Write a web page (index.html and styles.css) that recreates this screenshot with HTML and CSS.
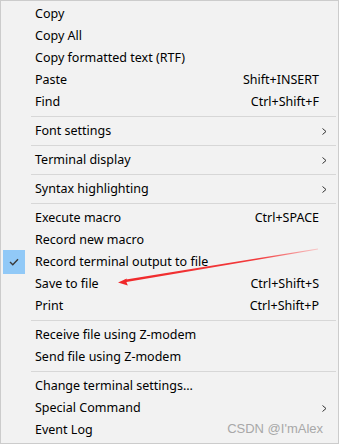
FILE: index.html
```html
<!DOCTYPE html>
<html lang="en">
<head>
  <meta charset="UTF-8">
  <title>Terminal context menu</title>
  <link rel="stylesheet" href="styles.css">
</head>
<body>
  <div class="menu">
    <div class="item"><span class="gutter"></span><span class="label">Copy</span><span class="keys"></span><span class="sub"></span></div>
    <div class="item"><span class="gutter"></span><span class="label">Copy All</span><span class="keys"></span><span class="sub"></span></div>
    <div class="item"><span class="gutter"></span><span class="label">Copy formatted text (RTF)</span><span class="keys"></span><span class="sub"></span></div>
    <div class="item"><span class="gutter"></span><span class="label">Paste</span><span class="keys">Shift+INSERT</span><span class="sub"></span></div>
    <div class="item"><span class="gutter"></span><span class="label">Find</span><span class="keys">Ctrl+Shift+F</span><span class="sub"></span></div>
    <div class="sep"></div>
    <div class="item"><span class="gutter"></span><span class="label">Font settings</span><span class="keys"></span><span class="sub"><svg width="5" height="7" viewBox="0 0 5 7"><polyline points="0.5,0.5 4,3.5 0.5,6.5" fill="none" stroke="#333" stroke-width="1"/></svg></span></div>
    <div class="sep"></div>
    <div class="item"><span class="gutter"></span><span class="label">Terminal display</span><span class="keys"></span><span class="sub"><svg width="5" height="7" viewBox="0 0 5 7"><polyline points="0.5,0.5 4,3.5 0.5,6.5" fill="none" stroke="#333" stroke-width="1"/></svg></span></div>
    <div class="sep"></div>
    <div class="item"><span class="gutter"></span><span class="label">Syntax highlighting</span><span class="keys"></span><span class="sub"><svg width="5" height="7" viewBox="0 0 5 7"><polyline points="0.5,0.5 4,3.5 0.5,6.5" fill="none" stroke="#333" stroke-width="1"/></svg></span></div>
    <div class="sep"></div>
    <div class="item"><span class="gutter"></span><span class="label">Execute macro</span><span class="keys">Ctrl+SPACE</span><span class="sub"></span></div>
    <div class="item"><span class="gutter"></span><span class="label">Record new macro</span><span class="keys"></span><span class="sub"></span></div>
    <div class="item"><span class="gutter"><span class="check"><svg width="10" height="8" viewBox="0 0 10 8"><polyline points="1,4 3.8,6.8 9,1.2" fill="none" stroke="#3a3a3a" stroke-width="1.4"/></svg></span></span><span class="label">Record terminal output to file</span><span class="keys"></span><span class="sub"></span></div>
    <div class="item"><span class="gutter"></span><span class="label">Save to file</span><span class="keys">Ctrl+Shift+S</span><span class="sub"></span></div>
    <div class="item"><span class="gutter"></span><span class="label">Print</span><span class="keys">Ctrl+Shift+P</span><span class="sub"></span></div>
    <div class="sep"></div>
    <div class="item"><span class="gutter"></span><span class="label">Receive file using Z-modem</span><span class="keys"></span><span class="sub"></span></div>
    <div class="item"><span class="gutter"></span><span class="label">Send file using Z-modem</span><span class="keys"></span><span class="sub"></span></div>
    <div class="sep"></div>
    <div class="item"><span class="gutter"></span><span class="label">Change terminal settings...</span><span class="keys"></span><span class="sub"></span></div>
    <div class="item"><span class="gutter"></span><span class="label">Special Command</span><span class="keys"></span><span class="sub"><svg width="5" height="7" viewBox="0 0 5 7"><polyline points="0.5,0.5 4,3.5 0.5,6.5" fill="none" stroke="#333" stroke-width="1"/></svg></span></div>
    <div class="item"><span class="gutter"></span><span class="label">Event Log</span><span class="keys"></span><span class="sub"></span></div>

    <!-- annotation drawn over the screenshot -->
    <svg class="arrow" width="339" height="444" viewBox="0 0 339 444">
      <defs>
        <linearGradient id="fade" x1="118" y1="282" x2="318" y2="249" gradientUnits="userSpaceOnUse">
          <stop offset="0" stop-color="#f0282a"/>
          <stop offset="0.7" stop-color="#f23a3c"/>
          <stop offset="1" stop-color="#f8c8c8"/>
        </linearGradient>
      </defs>
      <polygon points="318,248.6 318,249.4 125,282.2 124.5,279.8" fill="url(#fade)"/>
      <polygon points="118,282.6 127,278.4 126,281 127.8,285.6" fill="#f0282a"/>
    </svg>
    <span class="watermark">CSDN @I'mAlex</span>
  </div>
</body>
</html>
```

FILE: styles.css
```css
body {
  margin: 0;
  background-color: #f2f2f2;
}

.menu {
  position: relative;
  box-sizing: border-box;
  width: 339px;
  height: 444px;
  padding: 2px 0;
  border: 1px solid #cccccc;
  background-color: #f2f2f2;
  font-family: "Segoe UI", "Noto Sans", Arial, sans-serif;
  font-size: 12.5px;
  color: #000000;
}

.item {
  display: flex;
  align-items: center;
  height: 22px;
}

.gutter {
  display: flex;
  align-items: center;
  width: 34px;
  height: 22px;
  flex-shrink: 0;
}

.check {
  display: flex;
  align-items: center;
  justify-content: center;
  width: 22px;
  height: 24px;
  margin-left: 2px;
  background-color: #91c9f7;
}

.label,
.keys {
  white-space: nowrap;
  line-height: 16px;
  padding-bottom: 1px;
}

.label {
  flex: 1;
}

.sub {
  display: flex;
  align-items: center;
  width: 19px;
  padding-left: 3px;
  box-sizing: border-box;
}

.sep {
  height: 7px;
  display: flex;
  align-items: center;
  margin: 0 2px 0 30px;
}

.sep::before {
  content: "";
  flex: 1;
  height: 1px;
  background-color: #d7d7d7;
}

.arrow {
  position: absolute;
  left: -1px;
  top: -1px;
  pointer-events: none;
}

.watermark {
  position: absolute;
  right: 15px;
  bottom: 7px;
  font-family: "Liberation Sans", Arial, sans-serif;
  font-size: 13px;
  color: #a8a8a8;
}
```
